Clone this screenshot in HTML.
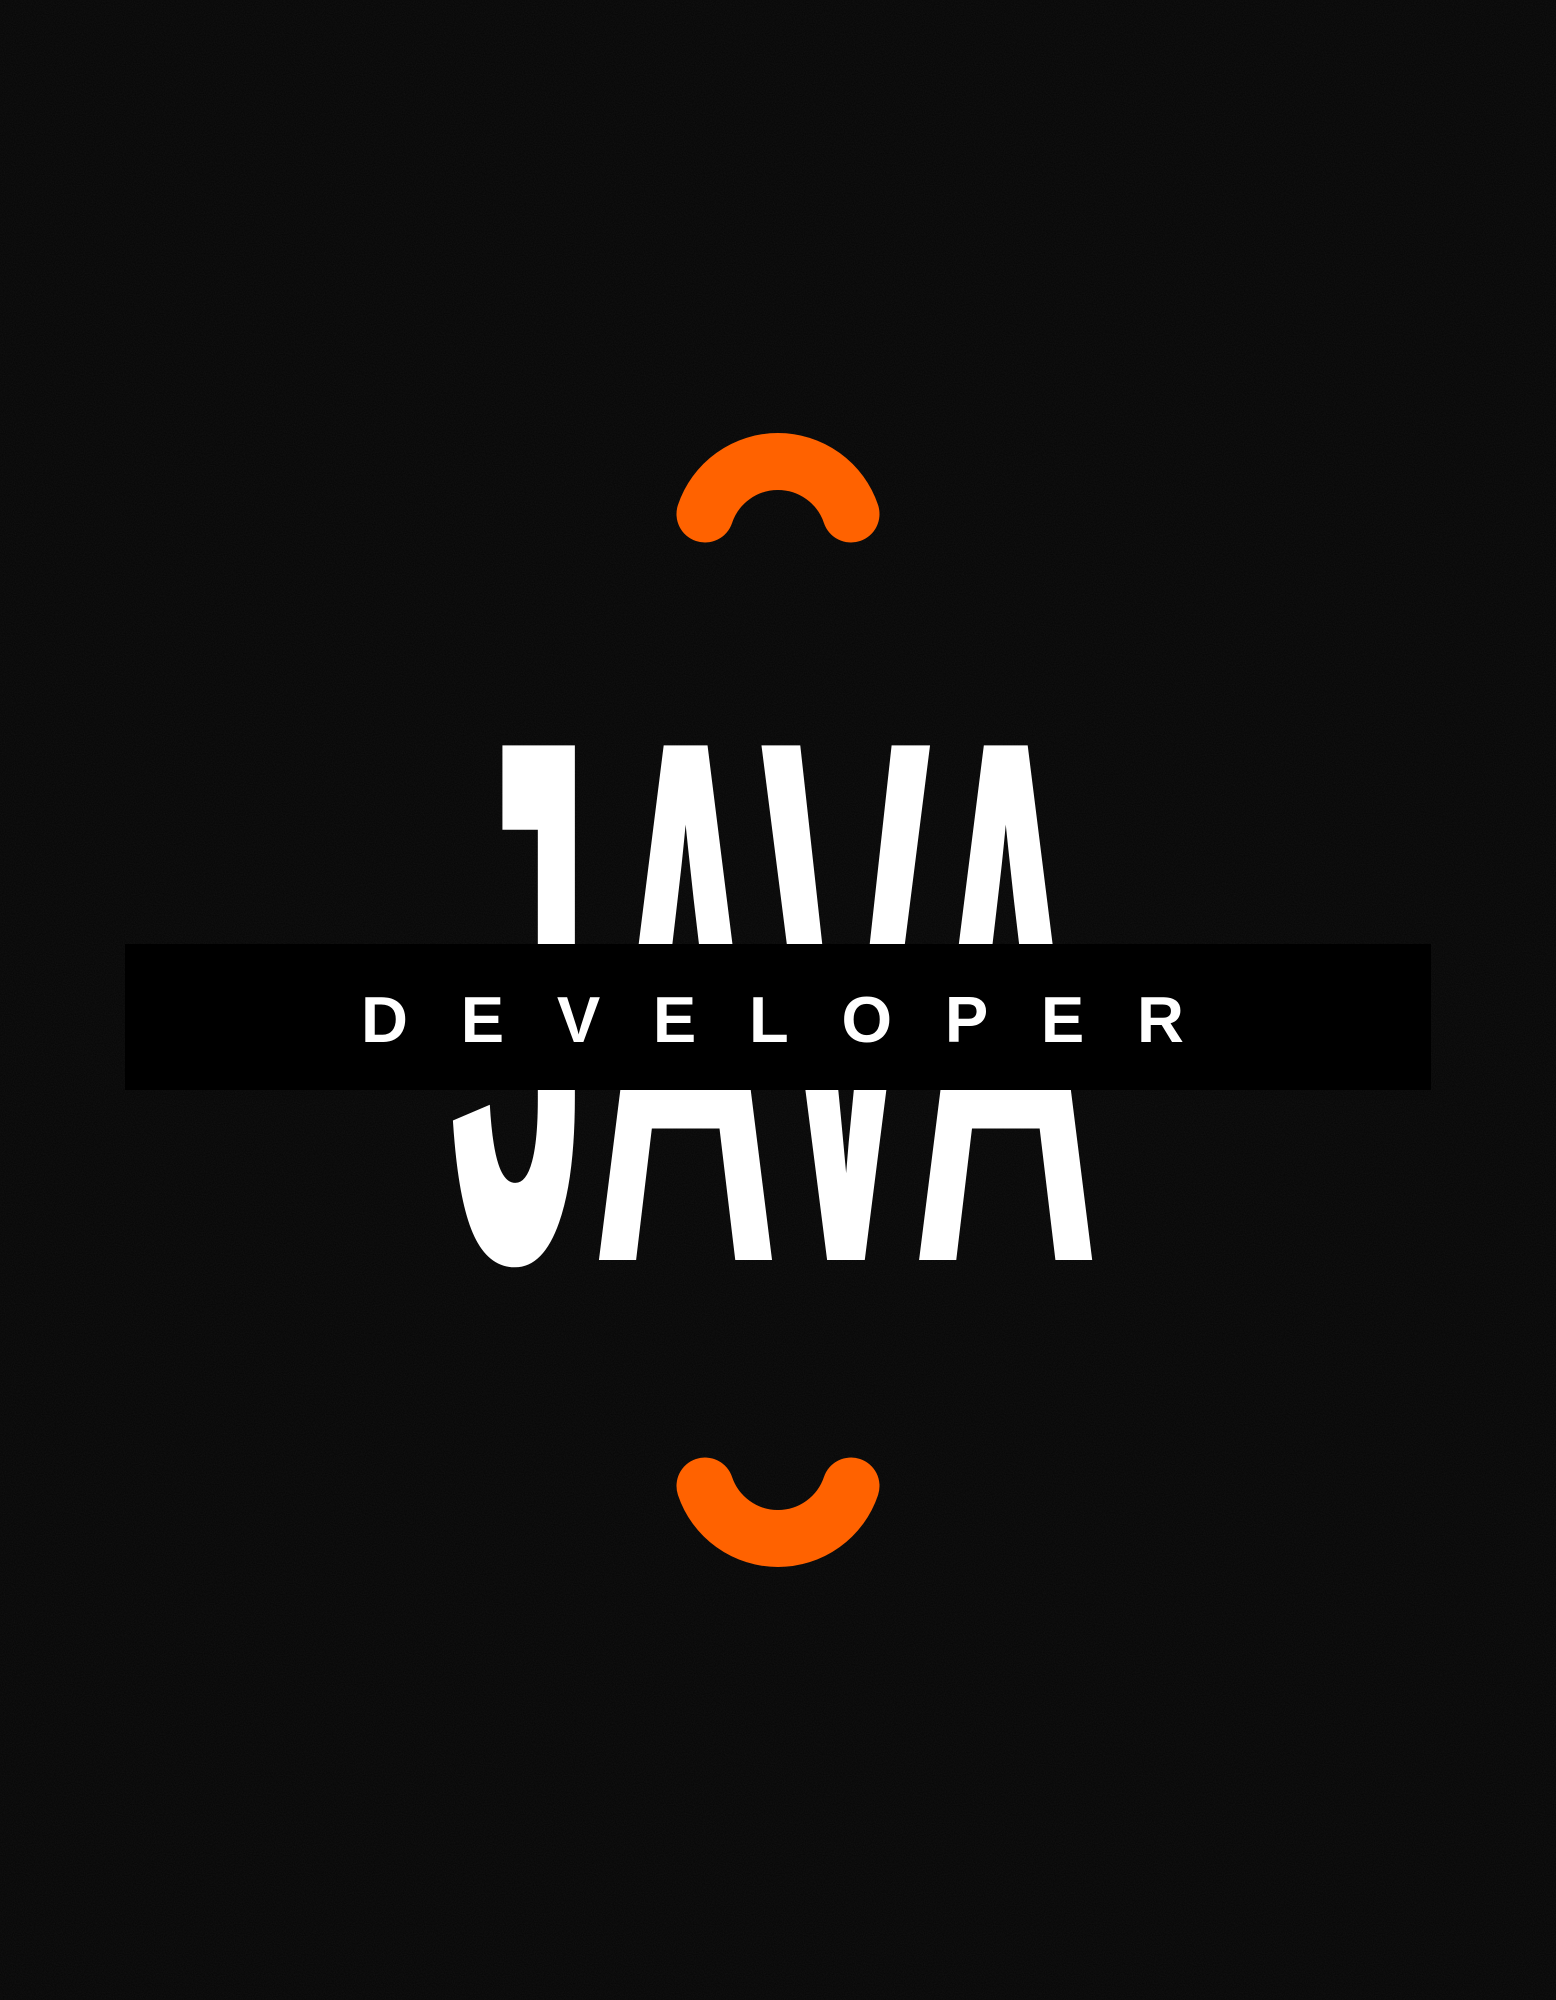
<!DOCTYPE html>
<html><head><meta charset="utf-8"><style>
html,body{margin:0;padding:0;background:#080808;}
svg{display:block}
</style></head><body>
<svg width="1556" height="2000" viewBox="0 0 1556 2000" xmlns="http://www.w3.org/2000/svg">
<defs>
<filter id="n"><feTurbulence type="fractalNoise" baseFrequency="0.9" numOctaves="2" seed="3"/><feColorMatrix values="0 0 0 0 1 0 0 0 0 1 0 0 0 0 1 0 0 0 0.06 -0.015"/></filter>
</defs>
<rect width="1556" height="2000" fill="#080808"/>
<rect width="1556" height="2000" filter="url(#n)"/>
<path d="M705 514 A77 77 0 0 1 851 514" fill="none" stroke="#ff6200" stroke-width="57" stroke-linecap="round"/>
<path d="M705 1486 A77 77 0 0 0 851 1486" fill="none" stroke="#ff6200" stroke-width="57" stroke-linecap="round"/>
<text x="449" y="1260" font-family="Liberation Sans Narrow, Liberation Sans, sans-serif" font-weight="bold" font-size="748" fill="#fff" textLength="650" lengthAdjust="spacingAndGlyphs">JAVA</text>
<rect x="125" y="944" width="1306" height="146" fill="#000"/>
<text x="361" y="1042" font-family="Liberation Sans, sans-serif" font-weight="bold" font-size="65" fill="#fff" textLength="823" lengthAdjust="spacing">DEVELOPER</text>
</svg>
</body></html>
